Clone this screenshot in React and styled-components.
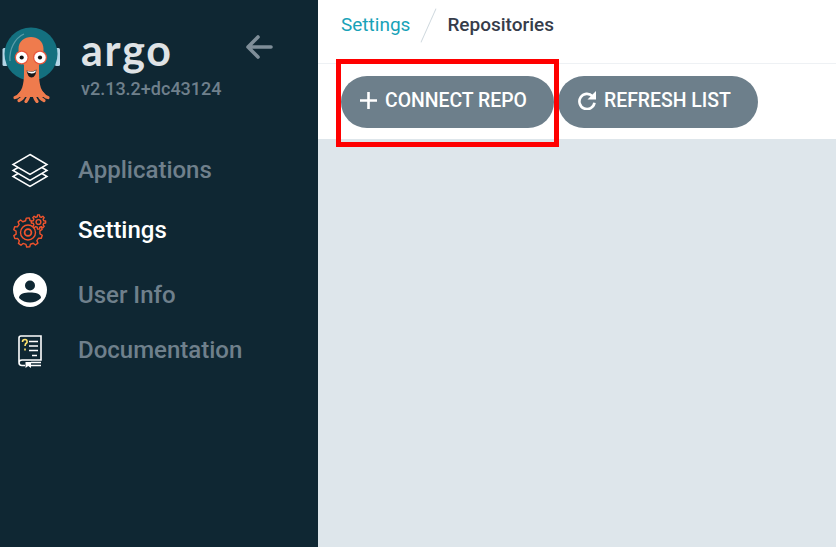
import React from 'react'
import styled, { createGlobalStyle } from 'styled-components'

const GlobalStyle = createGlobalStyle`
  html, body { margin: 0; padding: 0; height: 100%; }
  body { font-family: Roboto, "Liberation Sans", sans-serif; overflow: hidden; }
  #root { height: 100%; }
`

const OctoLogo = () => (
  <svg width="60" height="76" viewBox="0 0 60 76">
    <rect x="0.5" y="21" width="5" height="18" rx="1.5" fill="#b4d5e6" />
    <rect x="53" y="21" width="5" height="18" rx="1.5" fill="#b4d5e6" />
    <circle cx="29" cy="27" r="26.5" fill="#14707f" />
    <path d="M8 34 C7 22 13 11 22 7" fill="none" stroke="#5b9ca8" strokeWidth="1.3" />
    <path d="M22 46 C22 58 20 65 13 70 L46 70 C39 65 37 58 37 46 Z" fill="#ef7b4d" />
    <g fill="none" stroke="#ef7b4d" strokeLinecap="round" strokeWidth="3.2">
      <path d="M19 66 C17 69 15 70 13 70.5" />
      <path d="M23 66 C22 70 20 72 17 73.5" />
      <path d="M27 66 C27 70 26 72 24 74.5" />
      <path d="M32 66 C32 70 33 72 35 74.5" />
      <path d="M36 66 C37 70 39 72 42 73.5" />
      <path d="M40 66 C42 69 44 70 46 70.5" />
    </g>
    <path d="M22 52 L22 38 C18 34 16.5 28 16.5 22 C16.5 6 41.5 6 41.5 22 C41.5 28 40 34 37 38 L37 52 Z" fill="#ef7b4d" />
    <circle cx="19.7" cy="30.5" r="7" fill="#e9573c" />
    <circle cx="38" cy="30.5" r="7" fill="#e9573c" />
    <circle cx="19.7" cy="30.5" r="5.7" fill="#fff" />
    <circle cx="38" cy="30.5" r="5.7" fill="#fff" />
    <circle cx="19.7" cy="30.5" r="2.1" fill="#111" />
    <circle cx="38" cy="30.5" r="2.1" fill="#111" />
    <path d="M24.6 43.5 Q30 46 34.4 42.6 Q34 50.5 29.5 50.5 Q25.5 50 24.6 43.5 Z" fill="#1a1a1a" />
    <path d="M25.2 44 Q30 46 33.9 43.2 L33.5 45.2 Q30 47.4 25.8 45.6 Z" fill="#fff" />
  </svg>
)

const LayersIcon = () => (
  <svg width="38" height="36" viewBox="0 0 38 36" fill="none" stroke="#fff" strokeWidth="1.5">
    <path d="M19 1.5 L36 11.5 L19 21.5 L2 11.5 Z" />
    <path d="M7 14.5 L2 17.5 L19 27.5 L36 17.5 L31 14.5" />
    <path d="M7 20.5 L2 23.5 L19 33.5 L36 23.5 L31 20.5" />
  </svg>
)

const gearPath = (cx, cy, r1, r2, teeth, skip = 0) => {
  const pts = []
  const step = (Math.PI * 2) / teeth
  for (let i = 0; i < teeth; i++) {
    const a = i * step + skip
    const pairs = [
      [a - step * 0.3, r1],
      [a - step * 0.17, r2],
      [a + step * 0.17, r2],
      [a + step * 0.3, r1],
    ]
    pairs.forEach(([ang, r]) => pts.push(`${(cx + Math.cos(ang) * r).toFixed(2)} ${(cy + Math.sin(ang) * r).toFixed(2)}`))
  }
  return `M${pts.join(' L')} Z`
}

const GearsIcon = () => (
  <svg width="34" height="34" viewBox="0 0 34 34" fill="none" stroke="#f0532d" strokeWidth="1.4" strokeLinejoin="round">
    <path d={gearPath(15, 18.5, 12, 14.5, 10, 0.3)} />
    <circle cx="15" cy="18.5" r="7.5" />
    <circle cx="15" cy="18.5" r="3.4" strokeWidth="1.8" />
    <path d={gearPath(25.5, 8, 5.4, 7.2, 8)} fill="#0f2733" />
    <circle cx="25.5" cy="8" r="2.4" />
  </svg>
)

const UserIcon = () => (
  <svg width="34" height="34" viewBox="0 0 34 34">
    <circle cx="17" cy="17" r="17" fill="#fff" />
    <circle cx="17" cy="12.5" r="5" fill="#0f2733" />
    <path d="M6 25 C6 20.5 12 19.5 17 19.5 C22 19.5 28 20.5 28 25 C25 28 21 29.5 17 29.5 C13 29.5 9 28 6 25 Z" fill="#0f2733" />
  </svg>
)

const BookIcon = () => (
  <svg width="26" height="33" viewBox="0 0 26 33" fill="none" stroke="#fff" strokeWidth="1.6">
    <path d="M2 27 L2 3 Q2 1 4 1 L24 1 L24 25 L5 25 Q2 25 2 27.5 Q2 30.5 5 30.5 L8 30.5" />
    <path d="M14 30.5 L24 30.5 M14 27.5 L24 27.5" />
    <path d="M8.5 27 L14 27 L14 33 L11.2 31 L8.5 33 Z" fill="#fff" stroke="none" />
    <path d="M12 6.5 L21 6.5 M12 11 L21 11 M12 15.5 L21 15.5 M15 20.5 L20 20.5" />
    <path d="M5.5 7 Q5.5 4.5 8 4.5 Q10.5 4.5 10 7.5 Q8 8.8 8 11 M8 13.5 L8 15.5" stroke="#ffe36e" />
  </svg>
)

const ArrowLeft = () => (
  <svg width="28" height="24" viewBox="0 0 28 24" fill="none" stroke="#7f8e99" strokeWidth="3.6" strokeLinecap="round" strokeLinejoin="round">
    <path d="M26 12 L3 12 M13 2 L3 12 L13 22" />
  </svg>
)

const PlusIcon = () => (
  <svg width="17" height="17" viewBox="0 0 17 17" fill="none" stroke="#fff" strokeWidth="2.6">
    <path d="M8.5 0 L8.5 17 M0 8.5 L17 8.5" />
  </svg>
)

const RefreshIcon = () => (
  <svg width="18" height="19" viewBox="0 0 18 19" fill="none">
    <path d="M14.4 5.1 A7.6 7.6 0 1 0 16.5 11.8" stroke="#fff" strokeWidth="2.6" />
    <path d="M18 0 L18 8.5 L9.5 8.5 Z" fill="#fff" />
  </svg>
)

const navItems = [
  { label: 'Applications', icon: <LayersIcon />, height: 60, nudge: 2 },
  { label: 'Settings', icon: <GearsIcon />, active: true, height: 60, nudge: 2 },
  { label: 'User Info', icon: <UserIcon />, height: 69, nudge: -9 },
  { label: 'Documentation', icon: <BookIcon />, height: 42, nudge: 2 },
]

const App = () => {
  return (
    <Page>
      <GlobalStyle />
      <Sidebar>
        <Brand>
          <LogoBox><OctoLogo /></LogoBox>
          <BrandText>
            <Wordmark>argo</Wordmark>
            <Version>v2.13.2+dc43124</Version>
          </BrandText>
          <Collapse><ArrowLeft /></Collapse>
        </Brand>
        <Nav>
          {navItems.map((item) => (
            <NavItem key={item.label} $height={item.height}>
              <NavIcon $nudge={item.nudge}>{item.icon}</NavIcon>
              <NavLabel $active={item.active}>{item.label}</NavLabel>
            </NavItem>
          ))}
        </Nav>
      </Sidebar>
      <Main>
        <TopBar>
          <Crumb>Settings</Crumb>
          <Slash />
          <Current>Repositories</Current>
        </TopBar>
        <Toolbar>
          <Highlighted>
            <ActionButton $width={213} $pad={19}><PlusIcon />CONNECT REPO</ActionButton>
          </Highlighted>
          <ActionButton $width={200} $pad={20}><RefreshIcon />REFRESH LIST</ActionButton>
        </Toolbar>
        <Content />
      </Main>
    </Page>
  )
}

const Page = styled.div`
  display: flex;
  width: 836px;
  height: 547px;
`

const Sidebar = styled.div`
  width: 318px;
  flex: none;
  background: #0f2733;
  display: flex;
  flex-direction: column;
`

const Brand = styled.div`
  display: flex;
  align-items: flex-start;
  height: 140px;
  padding: 27px 0 0 2px;
  box-sizing: border-box;
`

const LogoBox = styled.div`
  width: 60px;
  height: 76px;
  flex: none;
`

const BrandText = styled.div`
  margin: 0 0 0 19px;
  width: 164px;
`

const Wordmark = styled.div`
  font-family: Lato, sans-serif;
  font-weight: 700;
  font-size: 43px;
  line-height: 44px;
  margin-top: 1px;
  letter-spacing: 1.8px;
  color: #dfe3e6;
`

const Version = styled.div`
  font-size: 18px;
  font-weight: 500;
  line-height: 22px;
  margin-top: 6px;
  color: #6f808c;
`

const Collapse = styled.div`
  margin: 8px 0 0 0;
`

const Nav = styled.div`
  display: flex;
  flex-direction: column;
`

const NavItem = styled.div`
  display: flex;
  align-items: center;
  height: ${(p) => p.$height}px;
  padding-left: 11px;
`

const NavIcon = styled.div`
  width: 38px;
  display: flex;
  justify-content: center;
  margin-right: 29px;
  margin-top: ${(p) => p.$nudge}px;
`

const NavLabel = styled.div`
  font-size: 24px;
  font-weight: 500;
  color: ${(p) => (p.$active ? '#ffffff' : '#6f808c')};
`

const Main = styled.div`
  flex: 1;
  display: flex;
  flex-direction: column;
  min-width: 0;
`

const TopBar = styled.div`
  height: 64px;
  box-sizing: border-box;
  border-bottom: 1px solid #eef1f4;
  display: flex;
  align-items: flex-start;
  padding: 14px 0 0 23px;
  background: #fff;
  font-size: 19px;
`

const Crumb = styled.span`
  color: #17a2b8;
  line-height: 22px;
`

const Slash = styled.span`
  width: 1px;
  height: 37px;
  background: #cfd8de;
  transform: rotate(24deg);
  margin: -7px 18px 0 18px;
`

const Current = styled.span`
  color: #363c4a;
  font-weight: 500;
  line-height: 22px;
`

const Toolbar = styled.div`
  height: 75px;
  box-sizing: border-box;
  padding: 12px 0 0 23px;
  display: flex;
  align-items: flex-start;
  gap: 4px;
  background: #fff;
`

const Highlighted = styled.div`
  position: relative;
  &::after {
    content: '';
    position: absolute;
    left: -5px;
    top: -17px;
    width: 223px;
    height: 88px;
    box-sizing: border-box;
    border: 5px solid #ff0000;
  }
`

const ActionButton = styled.button`
  width: ${(p) => p.$width}px;
  height: 52px;
  border: none;
  border-radius: 26px;
  background: #6d7f8b;
  color: #fff;
  font-family: Roboto, sans-serif;
  font-size: 19.4px;
  font-weight: 500;
  display: flex;
  align-items: center;
  justify-content: flex-start;
  gap: 8px;
  padding: 0 0 4px ${(p) => p.$pad}px;
`

const Content = styled.div`
  flex: 1;
  background: #dee6eb;
`

export default App
